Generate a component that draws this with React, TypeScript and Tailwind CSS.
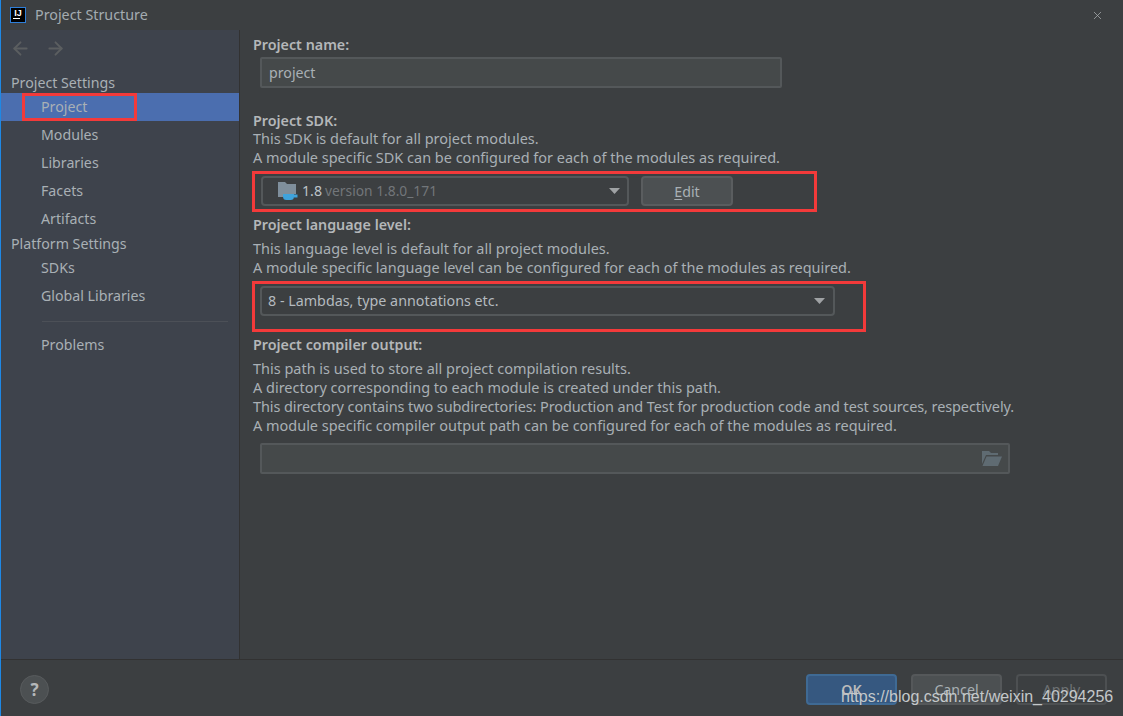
import { ArrowLeft, ArrowRight, X } from "lucide-react";

const font = "font-['Noto_Sans',sans-serif]";

function NavItem({ label, active }: { label: string; active?: boolean }) {
  return (
    <div className={`h-7 pl-[40px] pb-px flex items-center ${active ? "bg-[#4b6eaf]" : ""}`}>{label}</div>
  );
}

function Chevron() {
  return (
    <svg width="11" height="6" viewBox="0 0 11 6">
      <path d="M0 0h11L5.5 6z" fill="#9fa2a4" />
    </svg>
  );
}

function Hint({ children }: { children: React.ReactNode }) {
  return <p className="h-[19px] leading-[19px] text-[14.47px]">{children}</p>;
}

function Label({ children }: { children: React.ReactNode }) {
  return <h3 className="h-[19px] leading-[19px] font-semibold text-[14.3px] text-[#b4b7b9]">{children}</h3>;
}

export default function App() {
  return (
    <div className={`${font} relative w-[1123px] h-[716px] overflow-hidden flex flex-col border-l border-[#1e88e5] bg-[#3c3f41] text-[14.2px] text-[#a9b0b5]`}>
      <header className="h-[30px] shrink-0 flex items-center pl-[9px] pr-[19px]">
        <div className="w-4 h-4 bg-black border border-[#2f7fd8] flex flex-col items-center justify-start text-white">
          <span className="text-[9px] leading-[10px] font-bold font-['Liberation_Sans',sans-serif]">IJ</span>
          <span className="block w-[7px] h-px bg-white self-start ml-[2px]" />
        </div>
        <span className="ml-[9px] pb-px text-[14.3px] text-[#a4acb1]">Project Structure</span>
        <X className="ml-auto w-[13px] h-[13px] text-[#a9adb0]" strokeWidth={1.4} />
      </header>

      <div className="flex-1 flex min-h-0">
        <aside className="w-[239px] shrink-0 bg-[#3e434c] border-r border-[#323232] flex flex-col">
          <div className="h-[38px] pb-0.5 pl-[9px] flex items-center gap-[14px] text-[#5b5e60]">
            <ArrowLeft className="w-[21px] h-[21px]" strokeWidth={2.2} />
            <ArrowRight className="w-[21px] h-[21px]" strokeWidth={2.2} />
          </div>
          <div className="pl-[10px] h-[25px] leading-[30px]">Project Settings</div>
          <NavItem label="Project" active />
          <NavItem label="Modules" />
          <NavItem label="Libraries" />
          <NavItem label="Facets" />
          <NavItem label="Artifacts" />
          <div className="pl-[10px] h-[21px] leading-[21px]">Platform Settings</div>
          <NavItem label="SDKs" />
          <NavItem label="Global Libraries" />
          <div className="ml-[41px] mr-[11px] mt-[11px] mb-[9px] h-px bg-[#4c5057]" />
          <NavItem label="Problems" />
        </aside>

        <main className="flex-1 pl-[13px] pt-[5px] min-w-0">
          <Label>Project name:</Label>
          <div className="ml-[7px] mt-[3px] w-[522px] h-[31px] border-2 border-[#54585a] bg-[#45494a] rounded-[2px] flex items-center pl-[7px]">
            project
          </div>

          <div className="mt-[23px]">
            <Label>Project SDK:</Label>
            <div className="-mt-px">
              <Hint>This SDK is default for all project modules.</Hint>
              <Hint>A module specific SDK can be configured for each of the modules as required.</Hint>
            </div>
          </div>
          <div className="ml-[8px] mt-[9px] flex gap-3">
            <div className="w-[368px] h-[30px] border-2 border-[#54585a] rounded-[4px] flex items-center pl-[15px] pr-[7px]">
              <svg width="20" height="19" viewBox="0 0 20 19" className="shrink-0">
                <path d="M0 0h7l2 2h9v10H16v2H5v1H0z" fill="#7f8f9c" />
                <path d="M5 12h11v2.5a3.5 3.5 0 0 1-3.5 3.5h-4A3.5 3.5 0 0 1 5 14.5z" fill="#3fa3dc" />
                <path d="M16 12.5h3.5v3H16z" fill="#3fa3dc" />
              </svg>
              <span className="ml-[4px] text-[#bcc3c8]">1.8</span>
              <span className="ml-[3px] text-[13.8px] text-[#72767a]">version 1.8.0_171</span>
              <span className="ml-auto flex"><Chevron /></span>
            </div>
            <button className="w-[92px] h-[30px] pt-px border-2 border-[#5a5d5f] bg-[#4c5052] rounded-[4px] text-[#a9b0b5]">
              <span className="underline underline-offset-2">E</span>dit
            </button>
          </div>

          <div className="mt-[9px]">
            <Label>Project language level:</Label>
            <div className="mt-[5px]">
              <Hint>This language level is default for all project modules.</Hint>
              <Hint>A module specific language level can be configured for each of the modules as required.</Hint>
            </div>
          </div>
          <div className="ml-[7px] mt-[9px] w-[575px] h-[30px] border-2 border-[#54585a] rounded-[4px] flex items-center pl-[6px] pr-[8px]">
            <span className="text-[14.3px] text-[#b4babf]">8 - Lambdas, type annotations etc.</span>
            <span className="ml-auto flex"><Chevron /></span>
          </div>

          <div className="mt-[19px]">
            <Label>Project compiler output:</Label>
            <div className="mt-[5px]">
              <Hint>This path is used to store all project compilation results.</Hint>
              <Hint>A directory corresponding to each module is created under this path.</Hint>
              <Hint>
                <span className="tracking-[-0.09px]">This directory contains two subdirectories: Production and Test for production code and test sources, respectively.</span>
              </Hint>
              <Hint>A module specific compiler output path can be configured for each of the modules as required.</Hint>
            </div>
          </div>
          <div className="ml-[7px] mt-[8px] w-[750px] h-[31px] border-2 border-[#54585a] bg-[#45494a] rounded-[2px] flex items-center justify-end pr-[6px]">
            <svg width="20" height="15" viewBox="0 0 20 15">
              <path d="M0 0h7l2 2h7v2H4L0 13z" fill="#5f6b72" />
              <path d="M4.5 5.5H20L16 15H0.5z" fill="#5f6b72" />
            </svg>
          </div>
        </main>
      </div>

      <footer className="h-[57px] shrink-0 border-t border-[#323232] flex items-center pl-[19px] pr-[16px]">
        <div className="w-[29px] h-[29px] rounded-full bg-[#4c5052] border border-[#585b5d] flex items-center justify-center font-bold text-[#b4b7b9] text-[17px] mt-[3px]">?</div>
        <div className="ml-auto flex gap-[14px] mt-[3px]">
          <button className="w-[91px] h-[31px] rounded-[4px] border-2 border-[#3f6a94] bg-[#365880] font-semibold text-[#bbbbbb]">OK</button>
          <button className="w-[91px] h-[31px] rounded-[4px] border-2 border-[#55585a] bg-[#4c5052] text-[#a9b0b5]">Cancel</button>
          <button className="w-[91px] h-[31px] rounded-[4px] border-2 border-[#4d5052] text-[#6e7274]">Apply</button>
        </div>
      </footer>

      {/* red annotation boxes drawn over the dialog */}
      <div className="absolute left-[21px] top-[93px] w-[115px] h-[28px] border-[3px] border-[#f33a3a]" />
      <div className="absolute left-[251px] top-[171px] w-[565px] h-[41px] border-[3px] border-[#f33a3a]" />
      <div className="absolute left-[251px] top-[281px] w-[614px] h-[51px] border-[3px] border-[#f33a3a]" />

      {/* csdn watermark */}
      <div className="absolute left-[840px] top-[686px] text-[16px] leading-[22px] text-[#c4c8ca] font-['Liberation_Sans',sans-serif]">
        https://blog.csdn.net/weixin_40294256
      </div>
    </div>
  );
}
